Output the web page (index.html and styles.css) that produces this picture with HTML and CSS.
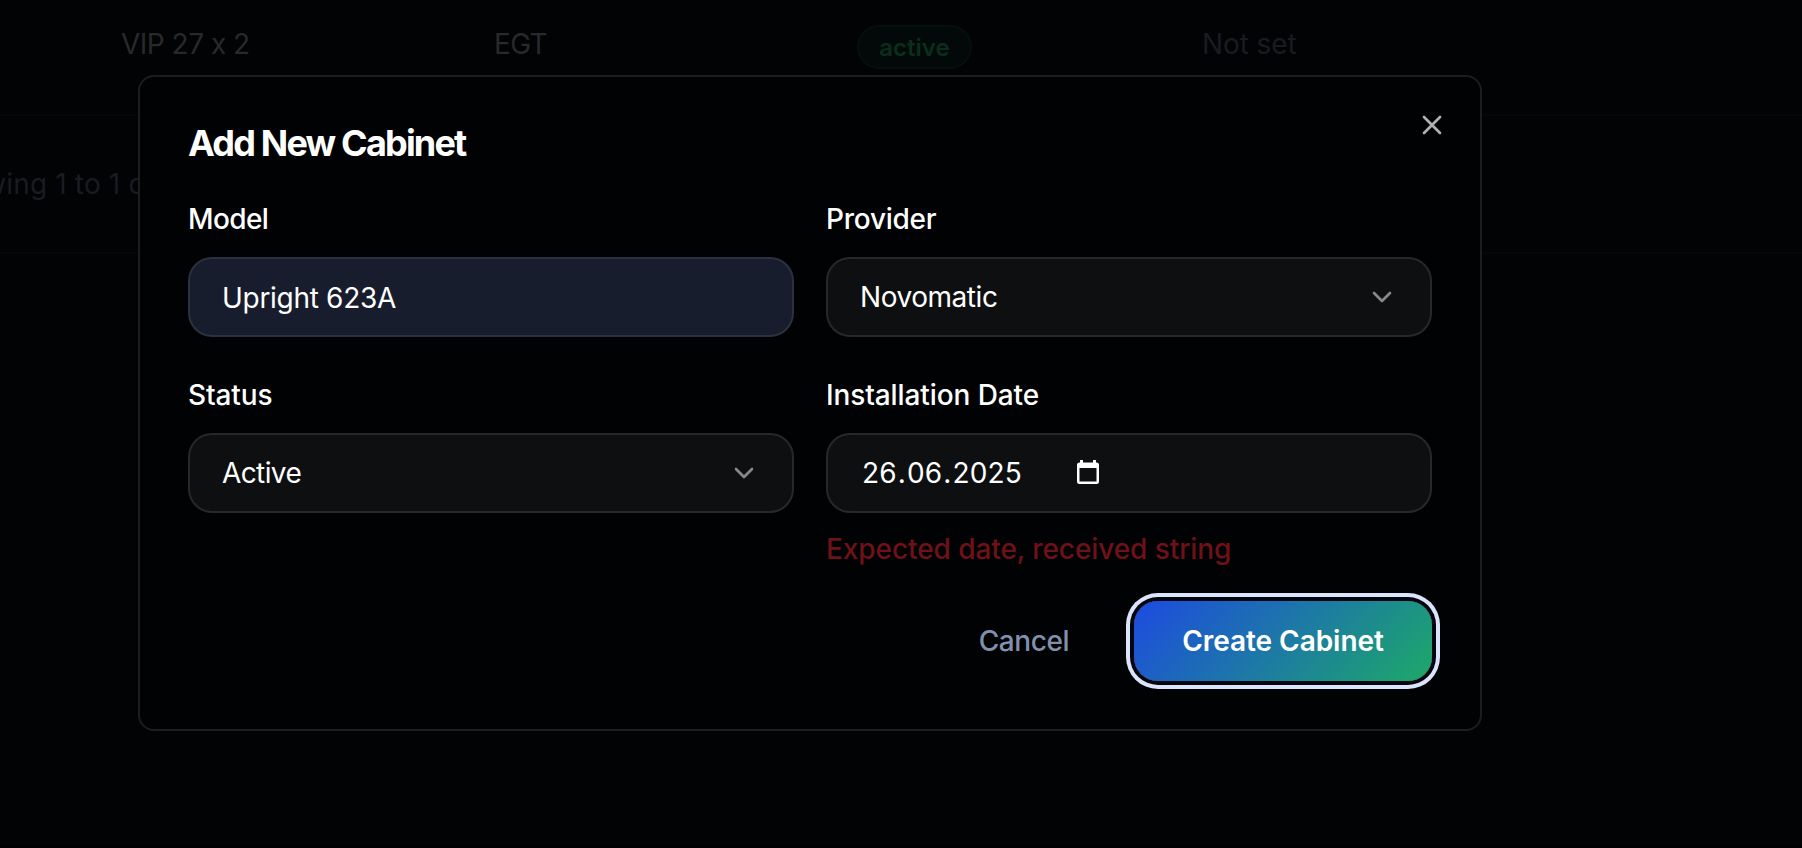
FILE: index.html
```html
<!DOCTYPE html>
<html lang="en">
<head>
<meta charset="utf-8">
<title>Cabinets</title>
<link rel="stylesheet" href="styles.css">
</head>
<body>
<main class="page">
  <div class="row">
    <span class="cell cell-model">VIP 27 x 2</span>
    <span class="cell cell-provider">EGT</span>
    <span class="cell cell-status"><span class="badge">active</span></span>
    <span class="cell cell-date">Not set</span>
  </div>
  <div class="pager"><span class="pager-text">Showing 1 to 1 of 1</span></div>
</main>
<section class="modal" role="dialog" aria-labelledby="title">
  <button class="close" aria-label="Close"><svg class="icon" viewBox="0 0 24 24"><path d="M18 6 6 18M6 6l12 12"/></svg></button>
  <h2 class="title" id="title">Add New Cabinet</h2>
  <form class="form">
    <div class="field">
      <span class="label label-model">Model</span>
      <div class="control control-filled"><span class="value value-model">Upright 623A</span></div>
    </div>
    <div class="field">
      <span class="label label-provider">Provider</span>
      <div class="control"><span class="value value-provider">Novomatic</span><svg class="icon chevron" viewBox="0 0 24 24"><path d="m6 9 6 6 6-6"/></svg></div>
    </div>
    <div class="field">
      <span class="label label-status">Status</span>
      <div class="control"><span class="value value-status">Active</span><svg class="icon chevron" viewBox="0 0 24 24"><path d="m6 9 6 6 6-6"/></svg></div>
    </div>
    <div class="field">
      <span class="label label-date">Installation Date</span>
      <div class="control control-date"><span class="value value-date">26<i>.</i>06<i>.</i>2025</span><svg class="calendar" viewBox="0 0 22 24"><path fill-rule="evenodd" d="M3 0h3v2.500h10V0h3v2.500h.5a2.500 2.500 0 0 1 2.500 2.500v16.500a2.500 2.500 0 0 1-2.500 2.500h-17A2.500 2.500 0 0 1 0 21.500V5a2.500 2.500 0 0 1 2.500-2.500H3zM2.500 8v13.500h17V8z"/></svg></div>
      <p class="error">Expected date, received string</p>
    </div>
  </form>
  <footer class="actions">
    <button class="button cancel">Cancel</button>
    <button class="button create">Create Cabinet</button>
  </footer>
</section>
</body>
</html>
```
FILE: styles.css
```css
* { box-sizing: border-box; }
body {
  margin: 0;
  width: 1802px;
  height: 848px;
  overflow: hidden;
  background: #000;
  color: #fff;
  font: 430 28px/40px Inter, "Liberation Sans", sans-serif;
}
.page { height: 846px; background: #020305; }
.row {
  display: grid;
  grid-template-columns: 373px 363px 345px 1fr;
  height: 116px;
  padding-left: 121px;
  border-bottom: 2px solid #060709;
  color: #29292b;
}
.cell { padding-top: 24px; white-space: nowrap; }
.cell-model { letter-spacing: -.5px; }
.cell-provider { letter-spacing: -.7px; }
.cell-status { padding-top: 25px; }
.cell-date { color: #1a1b21; letter-spacing: -.1px; }
.badge {
  display: flex;
  align-items: center;
  justify-content: center;
  width: 115px;
  height: 44px;
  padding-top: 1px;
  border: 2px solid #03110d;
  border-radius: 22px;
  background: #020908;
  color: #0a2e1c;
  font-size: 24px;
  font-weight: 600;
}
.pager {
  height: 138px;
  padding-top: 48px;
  border-bottom: 2px solid #060709;
  color: #1a1b21;
}
.pager-text { display: block; margin-left: -68px; white-space: nowrap; letter-spacing: .15px; }
.modal {
  position: absolute;
  left: 138px;
  top: 75px;
  width: 1344px;
  height: 656px;
  padding: 48px;
  border: 2px solid #1c1d1f;
  border-radius: 16px;
  background: #010203;
}
.icon {
  width: 32px;
  height: 32px;
  fill: none;
  stroke: currentColor;
  stroke-width: 2;
  stroke-linecap: round;
  stroke-linejoin: round;
}
.close {
  position: absolute;
  top: 32px;
  right: 32px;
  display: flex;
  padding: 0;
  border: 0;
  background: none;
  color: #b0b0b2;
}
.title {
  margin: 0;
  font-size: 36px;
  font-weight: 650;
  line-height: 36px;
  letter-spacing: -1.8px;
}
.form {
  display: grid;
  grid-template-columns: 1fr 1fr;
  column-gap: 32px;
  padding-top: 38px;
}
.field { display: flex; flex-direction: column; min-height: 176px; }
.label { height: 58px; font-weight: 540; letter-spacing: -.1px; }
.label-model { letter-spacing: -.6px; }
.label-provider { letter-spacing: -.25px; }
.control {
  display: flex;
  align-items: center;
  justify-content: space-between;
  height: 80px;
  padding: 0 32px;
  border: 2px solid #27282a;
  border-radius: 24px;
  background: #0e0f11;
}
.control-filled { padding-top: 2px; border-color: #2c3140; background: #181d2d; }
.chevron { color: #88888a; }
.control-date { justify-content: flex-start; }
.value-model { letter-spacing: -.3px; }
.value-provider { letter-spacing: -.45px; }
.value-status { letter-spacing: -.6px; }
.value-date { width: 217px; padding-left: 2px; letter-spacing: .15px; }
.value-date i { font-style: normal; padding: 0 1px; }
.calendar { width: 22px; height: 24px; margin-bottom: 2px; fill: #fff; }
.error { margin: 16px 0 0; color: #6f1118; font-weight: 450; letter-spacing: -.08px; }
.actions { display: flex; justify-content: flex-end; gap: 32px; margin-top: 32px; }
.button {
  height: 80px;
  border: 0;
  border-radius: 24px;
  background: none;
  font: 530 28px/40px Inter, "Liberation Sans", sans-serif;
  white-space: nowrap;
}
.cancel { width: 156px; padding: 0; color: #8290ad; letter-spacing: -.4px; }
.create {
  width: 298px;
  padding: 0;
  background: linear-gradient(135deg, #1d4ae2, #1da967);
  color: #fff;
  font-weight: 620;
  letter-spacing: -.05px;
  box-shadow: 0 0 0 4px #03060f, 0 0 0 8px #dce4fb;
}
```
